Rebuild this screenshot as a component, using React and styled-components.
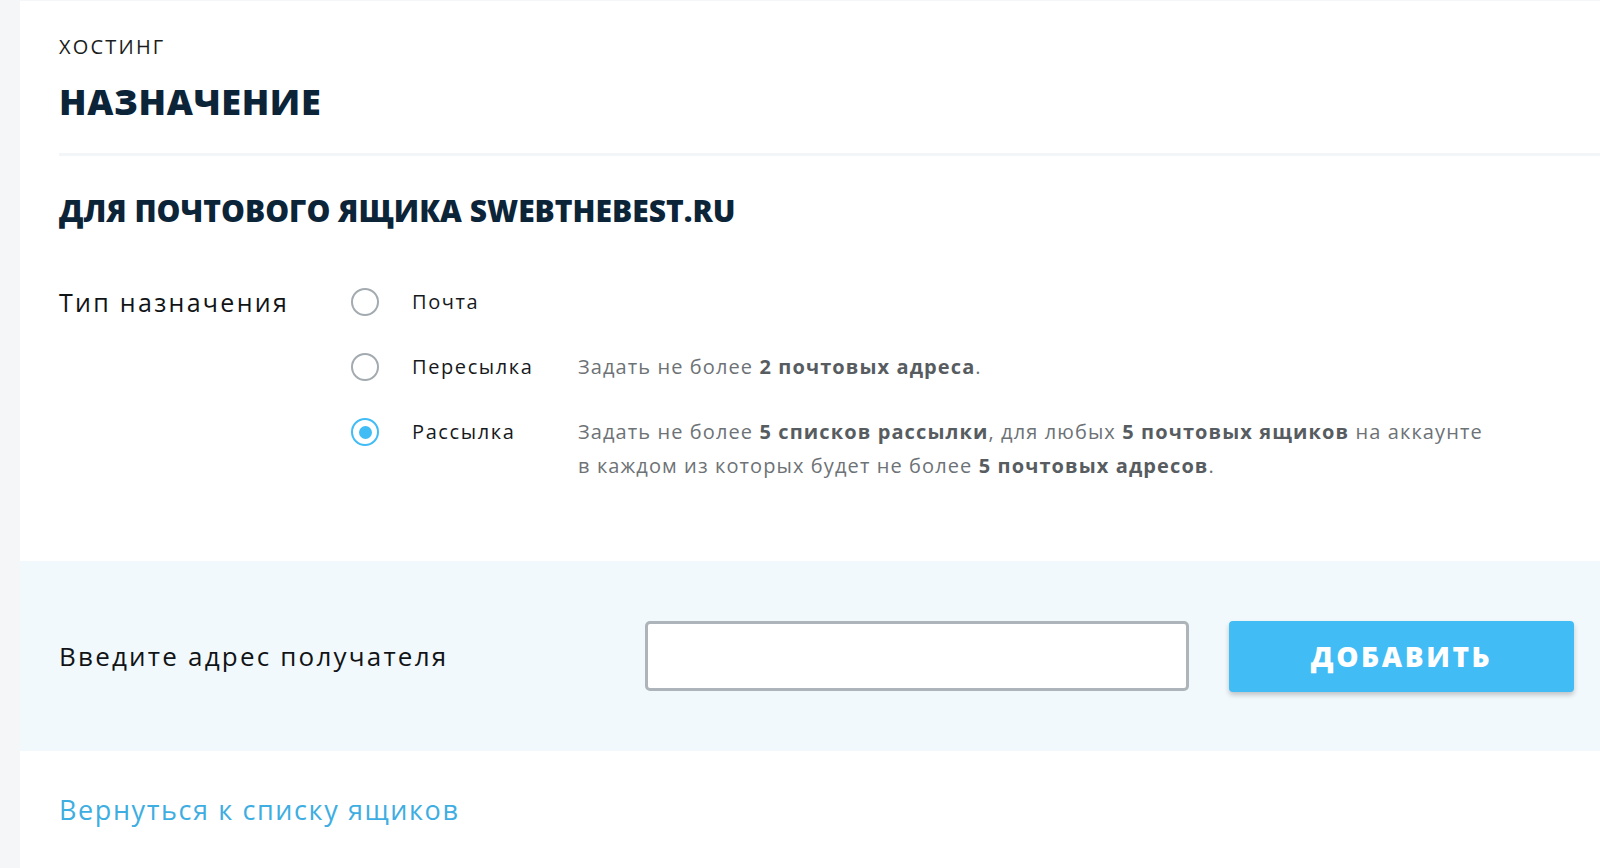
import React from "react";
import styled, { createGlobalStyle } from "styled-components";

const Global = createGlobalStyle`
  html, body { margin: 0; padding: 0; }
  body {
    background: #f4f6f8;
    font-family: "Open Sans", "Noto Sans", sans-serif;
    -webkit-font-smoothing: antialiased;
  }
  * { box-sizing: border-box; }
`;

const Panel = styled.main`
  margin: 1px 0 0 20px;
  min-height: 867px;
  background: #ffffff;
  overflow: hidden;
`;

const Header = styled.header`
  padding: 34px 0 0 39px;
`;

const Crumb = styled.div`
  font-size: 20px;
  line-height: 24px;
  color: #1a1d20;
  letter-spacing: 2.2px;
`;

const Title = styled.h1`
  margin: 21px 0 0;
  font-size: 36px;
  line-height: 44px;
  font-weight: 800;
  color: #0c2438;
  letter-spacing: 0.6px;
`;

const Divider = styled.hr`
  margin: 29px 0 0 39px;
  border: 0;
  height: 3px;
  background: #f3f6f8;
`;

const Section = styled.section`
  padding: 37px 0 78px 39px;
`;

const SectionTitle = styled.h2`
  margin: 0;
  font-size: 30px;
  line-height: 36px;
  font-weight: 800;
  color: #0c2438;
`;

const TypeBlock = styled.div`
  display: grid;
  grid-template-columns: 292px 1fr;
  margin-top: 56px;
`;

const FieldLabel = styled.div`
  font-size: 25px;
  line-height: 34px;
  color: #111417;
  letter-spacing: 2.3px;
`;

const Options = styled.div`
  display: flex;
  flex-direction: column;
  gap: 31px;
`;

const Option = styled.label`
  display: grid;
  grid-template-columns: 28px 133px 1fr;
  column-gap: 33px;
  align-items: start;
  cursor: pointer;
`;

const Radio = styled.span`
  margin-top: 3px;
  width: 28px;
  height: 28px;
  border-radius: 50%;
  border: 2px solid ${(p) => (p.$checked ? "#41bcf5" : "#a3abb0")};
  display: flex;
  align-items: center;
  justify-content: center;
  &::after {
    content: "";
    width: 13px;
    height: 13px;
    border-radius: 50%;
    background: ${(p) => (p.$checked ? "#41bcf5" : "transparent")};
  }
`;

const OptionName = styled.span`
  font-size: 20px;
  line-height: 34px;
  color: #16191c;
  letter-spacing: 1.6px;
  white-space: nowrap;
`;

const Hint = styled.span`
  font-size: 20px;
  line-height: 34px;
  color: #6d7276;
  letter-spacing: 1.1px;
  white-space: nowrap;
  b {
    font-weight: 700;
    color: #575c61;
  }
`;

const Band = styled.div`
  height: 190px;
  background: #f2f9fd;
  display: grid;
  grid-template-columns: 546px 544px 345px;
  column-gap: 40px;
  align-items: center;
  padding-left: 39px;
`;

const BandLabel = styled.div`
  font-size: 26px;
  line-height: 34px;
  color: #111417;
  letter-spacing: 2.2px;
  white-space: nowrap;
`;

const Input = styled.input`
  height: 70px;
  width: 100%;
  border: 3px solid #adb5ba;
  border-radius: 5px;
  background: #fff;
  font-size: 20px;
  padding: 0 16px;
  font-family: inherit;
  outline: none;
`;

const AddButton = styled.button`
  height: 71px;
  border: 0;
  border-radius: 4px;
  background: #41bcf5;
  color: #fff;
  font-family: inherit;
  font-size: 28px;
  font-weight: 800;
  letter-spacing: 2.6px;
  box-shadow: 0 3px 5px rgba(0, 0, 0, 0.22);
  cursor: pointer;
`;

const Footer = styled.div`
  padding: 42px 0 0 39px;
`;

const BackLink = styled.a`
  font-size: 27px;
  line-height: 34px;
  color: #3eaee2;
  text-decoration: none;
  letter-spacing: 1.6px;
`;

const options = [
  { name: "Почта", hint: null },
  {
    name: "Пересылка",
    hint: (
      <>
        Задать не более <b>2 почтовых адреса</b>.
      </>
    ),
  },
  {
    name: "Рассылка",
    checked: true,
    hint: (
      <>
        Задать не более <b>5 списков рассылки</b>, для любых <b>5 почтовых ящиков</b> на аккаунте
        <br />в каждом из которых будет не более <b>5 почтовых адресов</b>.
      </>
    ),
  },
];

export default function App() {
  return (
    <>
      <Global />
      <Panel>
        <Header>
          <Crumb>ХОСТИНГ</Crumb>
          <Title>НАЗНАЧЕНИЕ</Title>
        </Header>
        <Divider />
        <Section>
          <SectionTitle>ДЛЯ ПОЧТОВОГО ЯЩИКА SWEBTHEBEST.RU</SectionTitle>
          <TypeBlock>
            <FieldLabel>Тип назначения</FieldLabel>
            <Options>
              {options.map((o) => (
                <Option key={o.name}>
                  <Radio $checked={!!o.checked} />
                  <OptionName>{o.name}</OptionName>
                  {o.hint ? <Hint>{o.hint}</Hint> : <span />}
                </Option>
              ))}
            </Options>
          </TypeBlock>
        </Section>
        <Band>
          <BandLabel>Введите адрес получателя</BandLabel>
          <Input type="text" aria-label="Адрес получателя" />
          <AddButton>ДОБАВИТЬ</AddButton>
        </Band>
        <Footer>
          <BackLink href="#">Вернуться к списку ящиков</BackLink>
        </Footer>
      </Panel>
    </>
  );
}
